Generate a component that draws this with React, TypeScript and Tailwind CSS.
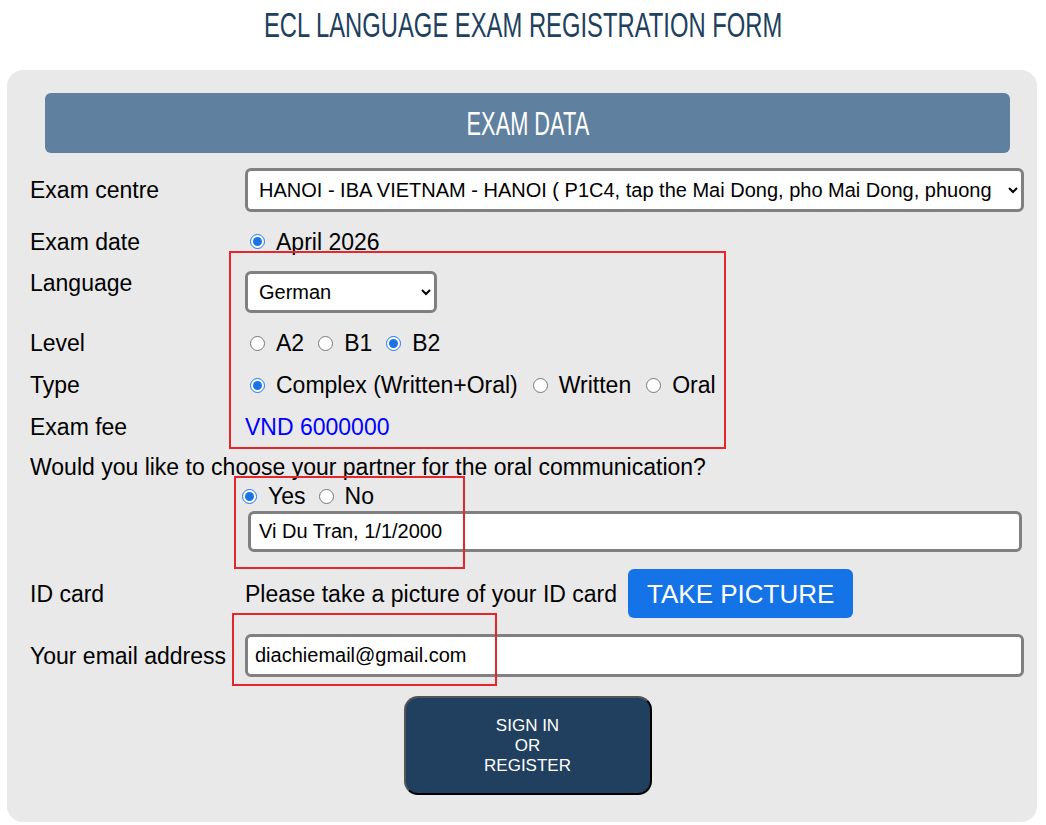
import React from 'react'

const labelCls = "w-[215px] shrink-0 text-[23px] leading-[24px]"
const radioCls = "m-0 ml-[5px] mr-[11px] h-[15px] w-[15px] shrink-0 accent-[#1a73e8]"

function Radio({ name, label, checked }: { name: string; label: string; checked?: boolean }) {
  return (
    <label className="flex items-center text-[23px] leading-[24px]">
      <input type="radio" name={name} defaultChecked={checked} className={radioCls} />
      {label}
    </label>
  )
}

export default function App() {
  return (
    <div className="relative min-h-[825px] w-[1046px] bg-white font-['Liberation_Sans',Arial,sans-serif] text-black">
      <h1 className="flex h-[48px] items-center justify-center">
        <span className="inline-block scale-x-[0.68] whitespace-nowrap text-[35px] leading-none text-[#213f5e]">
          ECL LANGUAGE EXAM REGISTRATION FORM
        </span>
      </h1>

      <div className="mx-[7px] mt-[22px] w-[1030px] rounded-[16px] bg-[#e9e9e9] pb-[27px] pt-[23px]">
        {/* header bar */}
        <div className="ml-[38px] mr-[27px] flex h-[60px] items-center justify-center rounded-[6px] bg-[#5f809f]">
          <span className="inline-block scale-x-[0.66] whitespace-nowrap text-[33px] leading-none text-white">
            EXAM DATA
          </span>
        </div>

        <div className="mt-[15px] pl-[23px] pr-[13px]">
          <div className="flex h-[44px] items-center">
            <div className={labelCls}>Exam centre</div>
            <select className="h-[44px] min-w-0 flex-1 rounded-[6px] border-[3px] border-[#808080] bg-white pl-[7px] pr-[12px] text-[20px]">
              <option>HANOI - IBA VIETNAM - HANOI ( P1C4, tap the Mai Dong, pho Mai Dong, phuong Hoang Van Thu, quan Hoang Mai )</option>
            </select>
          </div>

          <div className="flex h-[59px] items-center">
            <div className={labelCls}>Exam date</div>
            <Radio name="date" label="April 2026" checked />
          </div>

          <div className="flex items-start">
            <div className={labelCls}>Language</div>
            <select className="h-[42px] w-[192px] rounded-[6px] border-[3px] border-[#808080] bg-white pl-[7px] pr-[4px] text-[20px]">
              <option>German</option>
              <option>English</option>
            </select>
          </div>

          <div className="mt-[9px] flex h-[42px] items-center">
            <div className={labelCls}>Level</div>
            <div className="flex items-center gap-[9px]">
              <Radio name="level" label="A2" />
              <Radio name="level" label="B1" />
              <Radio name="level" label="B2" checked />
            </div>
          </div>

          <div className="flex h-[42px] items-center">
            <div className={labelCls}>Type</div>
            <div className="flex items-center gap-[10px]">
              <Radio name="type" label="Complex (Written+Oral)" checked />
              <Radio name="type" label="Written" />
              <Radio name="type" label="Oral" />
            </div>
          </div>

          <div className="flex h-[42px] items-center">
            <div className={labelCls}>Exam fee</div>
            <div className="text-[23px] leading-[24px] text-[#0000ff]">VND 6000000</div>
          </div>

          <div className="flex h-[38px] items-center text-[23px] leading-[24px]">
            Would you like to choose your partner for the oral communication?
          </div>

          <div className="flex h-[20px] items-center gap-[8px] pl-[207px]">
            <Radio name="partner" label="Yes" checked />
            <Radio name="partner" label="No" />
          </div>

          <div className="ml-[218px] mr-[2px] mt-[5px]">
            <input
              type="text"
              defaultValue="Vi Du Tran, 1/1/2000"
              className="h-[41px] w-full rounded-[6px] border-[3px] border-[#808080] bg-white pl-[8px] text-[20px] outline-none"
            />
          </div>

          <div className="mt-[17px] flex h-[49px] items-center">
            <div className={labelCls}>ID card</div>
            <span className="text-[23px] leading-[24px]">Please take a picture of your ID card</span>
            <button className="ml-[11px] h-[49px] rounded-[6px] bg-[#1473e6] px-[19px] text-[26px] leading-none text-white">
              TAKE PICTURE
            </button>
          </div>

          <div className="mt-[16px] flex h-[43px] items-center">
            <div className={labelCls}>Your email address</div>
            <input
              type="text"
              defaultValue="diachiemail@gmail.com"
              className="h-[43px] min-w-0 flex-1 rounded-[6px] border-[3px] border-[#808080] bg-white pl-[7px] text-[20px] outline-none"
            />
          </div>
        </div>

        <div className="mt-[19px] flex justify-center pl-[38px] pr-[27px]">
          <button className="flex h-[99px] w-[248px] flex-col items-center justify-center rounded-[14px] border-2 border-b-black border-l-[#555] border-r-black border-t-[#555] bg-[#213f5e] text-[17px] leading-[20px] text-white">
            <span>SIGN IN</span>
            <span>OR</span>
            <span>REGISTER</span>
          </button>
        </div>
      </div>

      {/* red annotation boxes */}
      <div className="pointer-events-none absolute left-[229px] top-[251px] h-[198px] w-[497px] border-2 border-[#e5262b]" />
      <div className="pointer-events-none absolute left-[234px] top-[476px] h-[93px] w-[231px] border-2 border-[#e5262b]" />
      <div className="pointer-events-none absolute left-[232px] top-[613px] h-[73px] w-[265px] border-2 border-[#e5262b]" />
    </div>
  )
}
